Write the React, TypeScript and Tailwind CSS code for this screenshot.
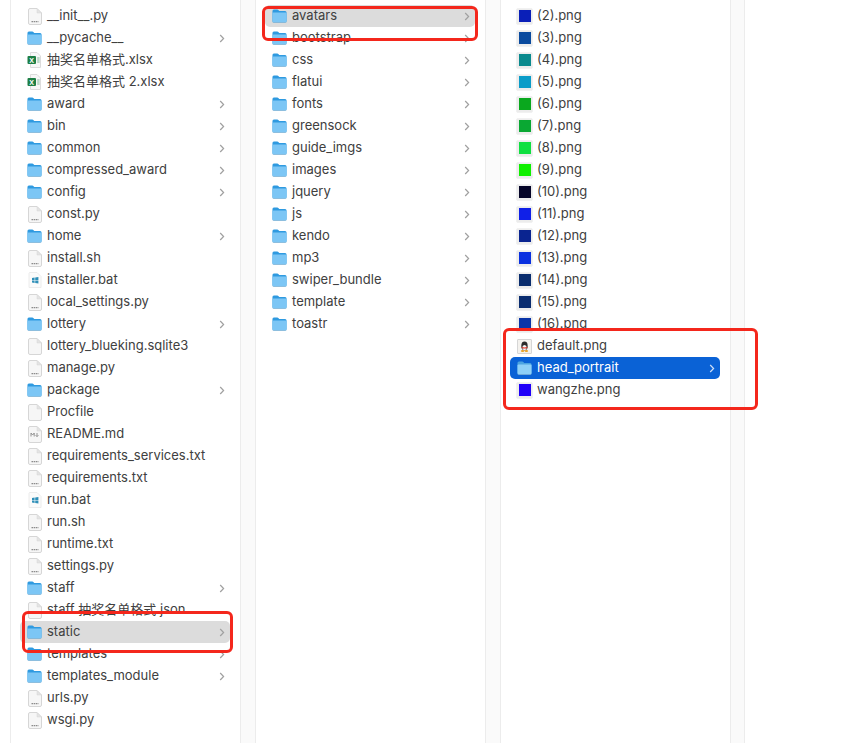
import React from "react";

type Kind = "folder" | "doc" | "blank" | "xlsx" | "bat" | "md" | "swatch" | "qq";
type Item = { n: string; k: Kind; c?: string; sel?: "gray" | "blue" };

const Folder = ({ light }: { light?: boolean }) => (
  <svg width="15" height="14" viewBox="0 0 16 14" preserveAspectRatio="none" className="block">
    <path d="M0.5 2 Q0.5 0.5 2 0.5 H5.6 Q6.4 0.5 7 1.2 L7.8 2 H14 Q15.5 2 15.5 3.5 V12 Q15.5 13.5 14 13.5 H2 Q0.5 13.5 0.5 12 Z" fill={light ? "#4aa3e0" : "#2f9ae0"} />
    <path d="M0.5 4.6 Q0.5 3.6 1.6 3.6 H14.4 Q15.5 3.6 15.5 4.6 V12 Q15.5 13.5 14 13.5 H2 Q0.5 13.5 0.5 12 Z" fill={light ? "#8ed0f7" : "#7cc6f5"} />
    <path d="M0.5 12 Q0.5 13.5 2 13.5 H14 Q15.5 13.5 15.5 12 V12.6 Q15.5 14 14 14 H2 Q0.5 14 0.5 12.6 Z" fill="#9aa7b0" opacity=".6" />
  </svg>
);

const Page = ({ children, lines }: { children?: React.ReactNode; lines?: boolean }) => (
  <svg width="14" height="17" viewBox="0 0 14 17" className="block">
    <path d="M2 0.5 H9 L13.5 5 V15 Q13.5 16.5 12 16.5 H2 Q0.5 16.5 0.5 15 V2 Q0.5 0.5 2 0.5 Z" fill="#f6f6f6" stroke="#d6d6d6" />
    <path d="M9 0.5 V5 H13.5 Z" fill="#e4e4e4" stroke="#d6d6d6" strokeWidth=".5" />
    {lines && <path d="M3.5 13.6 H10.5" stroke="#8c8c8c" strokeWidth="1.2" strokeDasharray="1.6 .6" />}
    {children}
  </svg>
);

const Qq = () => (
  <span className="block w-[15px] h-[15px] bg-[#f4f2ee] border border-[#d6d6d6] rounded-[1px]">
    <svg width="13" height="13" viewBox="0 0 13 13" className="block">
      <ellipse cx="6.5" cy="6" rx="3.2" ry="4.4" fill="#2a2a2a" />
      <ellipse cx="6.5" cy="7.6" rx="2.2" ry="2.6" fill="#f5f5f5" />
      <path d="M3.6 6.8 Q6.5 8 9.4 6.8 L9.2 8 Q6.5 9 3.8 8 Z" fill="#e03020" />
      <ellipse cx="4.6" cy="11" rx="1.7" ry=".9" fill="#e8a020" />
      <ellipse cx="8.4" cy="11" rx="1.7" ry=".9" fill="#e8a020" />
    </svg>
  </span>
);

const Icon = ({ k, c, light }: { k: Kind; c?: string; light?: boolean }) => {
  if (k === "folder") return <Folder light={light} />;
  if (k === "doc") return <Page lines />;
  if (k === "blank") return <Page />;
  if (k === "md")
    return (
      <Page>
        <path d="M3 10.5 V7 L4.6 9 L6.2 7 V10.5 M9 7 V10.5 M7.6 9.2 L9 10.6 L10.4 9.2" fill="none" stroke="#8a8a8a" strokeWidth=".9" />
      </Page>
    );
  if (k === "bat")
    return (
      <svg width="14" height="16" viewBox="0 0 14 16" className="block">
        <path d="M1.5 0.5 H9 L13 4.5 V15.5 H1 V1 Z" fill="#fbfbfb" stroke="#ececec" />
        <path d="M4 6 L6.6 5.6 V8 H4 Z M7.2 5.5 L10.4 5 V8 H7.2 Z M4 8.6 H6.6 V11 L4 10.6 Z M7.2 8.6 H10.4 V11.6 L7.2 11.1 Z" fill="#2f8fb8" />
      </svg>
    );
  if (k === "xlsx")
    return (
      <svg width="15" height="16" viewBox="0 0 15 16" className="block">
        <path d="M3.5 0.5 H10 L13.5 4 V15.5 H3.5 Z" fill="#f7f7f7" stroke="#dcdcdc" />
        <rect x="0.5" y="4" width="8.5" height="8" rx="1" fill="#1d7f45" />
        <text x="4.7" y="10.6" fontSize="7" fontFamily="Liberation Sans" fontWeight="700" textAnchor="middle" fill="#fff">X</text>
        <path d="M10.2 6 H12.6 M10.2 8 H12.6 M10.2 10 H12.6" stroke="#7fb896" />
      </svg>
    );
  if (k === "qq") return <Qq />;
  return (
    <span className="block w-[15px] h-[15px] bg-[#ececec] p-[1.5px] shadow-[0_0_1px_#aaa]">
      <span className="block w-full h-full" style={{ background: c }} />
    </span>
  );
};

const f = (n: string): Item => ({ n, k: "folder" });
const d = (n: string): Item => ({ n, k: "doc" });

const col1: Item[] = [
  d("__init__.py"),
  f("__pycache__"),
  { n: "抽奖名单格式.xlsx", k: "xlsx" },
  { n: "抽奖名单格式 2.xlsx", k: "xlsx" },
  f("award"),
  f("bin"),
  f("common"),
  f("compressed_award"),
  f("config"),
  d("const.py"),
  f("home"),
  d("install.sh"),
  { n: "installer.bat", k: "bat" },
  d("local_settings.py"),
  f("lottery"),
  { n: "lottery_blueking.sqlite3", k: "blank" },
  d("manage.py"),
  f("package"),
  { n: "Procfile", k: "blank" },
  { n: "README.md", k: "md" },
  d("requirements_services.txt"),
  d("requirements.txt"),
  { n: "run.bat", k: "bat" },
  d("run.sh"),
  d("runtime.txt"),
  d("settings.py"),
  f("staff"),
  { n: "staff 抽奖名单格式.json", k: "blank" },
  { n: "static", k: "folder", sel: "gray" },
  f("templates"),
  f("templates_module"),
  d("urls.py"),
  d("wsgi.py"),
];

const col2: Item[] = [
  { n: "avatars", k: "folder", sel: "gray" },
  ...["bootstrap", "css", "flatui", "fonts", "greensock", "guide_imgs", "images", "jquery", "js", "kendo", "mp3", "swiper_bundle", "template", "toastr"].map(f),
];

const sw: [string, string][] = [
  ["(2).png", "#0a1fb8"],
  ["(3).png", "#0a4a9e"],
  ["(4).png", "#0a8a8e"],
  ["(5).png", "#0a9cc8"],
  ["(6).png", "#0aa81e"],
  ["(7).png", "#0aa833"],
  ["(8).png", "#10e040"],
  ["(9).png", "#0ff000"],
  ["(10).png", "#050528"],
  ["(11).png", "#1020e8"],
  ["(12).png", "#0a2490"],
  ["(13).png", "#0a30e0"],
  ["(14).png", "#0a2d6e"],
  ["(15).png", "#0a2d70"],
  ["(16).png", "#0a35a8"],
];

const col3: Item[] = [
  ...sw.map(([n, c]): Item => ({ n, k: "swatch", c })),
  { n: "default.png", k: "qq" },
  { n: "head_portrait", k: "folder", sel: "blue" },
  { n: "wangzhe.png", k: "swatch", c: "#2000f8" },
];

const Row = ({ it }: { it: Item }) => {
  const blue = it.sel === "blue";
  const bg = blue ? "bg-[#0a62d6] text-white" : it.sel === "gray" ? "bg-[#dcdcdc] text-[#404040]" : "text-[#404040]";
  return (
    <div className={`h-[22px] flex items-center rounded-[5px] pl-[6px] pr-[5px] ${bg}`}>
      <span className="w-[17px] flex justify-center shrink-0">
        <Icon k={it.k} c={it.c} light={blue} />
      </span>
      <span className="ml-[4px] text-[13px] whitespace-nowrap font-['Inter','Noto_Sans_CJK_SC',sans-serif] flex-1">{it.n}</span>
      {it.k === "folder" && (
        <svg width="6" height="9" viewBox="0 0 6 9" className={blue ? "text-[#cfe0f7]" : "text-[#a0a0a0]"}>
          <path d="M1.2 1 L4.6 4.5 L1.2 8" fill="none" stroke="currentColor" strokeWidth="1.2" />
        </svg>
      )}
    </div>
  );
};

const Col = ({ items }: { items: Item[] }) => (
  <div className="w-[231px] h-full bg-white border-x border-[#ececec] pt-[5px] pl-[9px] pr-[10px] overflow-hidden shrink-0">
    {items.map((it) => (
      <Row key={it.n} it={it} />
    ))}
  </div>
);

export default function App() {
  return (
    <div className="relative w-[842px] h-[743px] bg-white overflow-hidden">
      <div className="flex h-full w-[735px] ml-[10px] gap-[14px] bg-[#fafafa] border-r border-[#ececec]">
        <Col items={col1} />
        <Col items={col2} />
        <Col items={col3} />
      </div>
      <div className="absolute left-[22px] top-[611px] w-[211px] h-[42px] border-[3px] border-[#f4271c] rounded-[6px]" />
      <div className="absolute left-[262px] top-[6px] w-[216px] h-[35px] border-[3px] border-[#f4271c] rounded-[6px]" />
      <div className="absolute left-[503px] top-[328px] w-[255px] h-[82px] border-[3px] border-[#f4271c] rounded-[6px]" />
    </div>
  );
}
